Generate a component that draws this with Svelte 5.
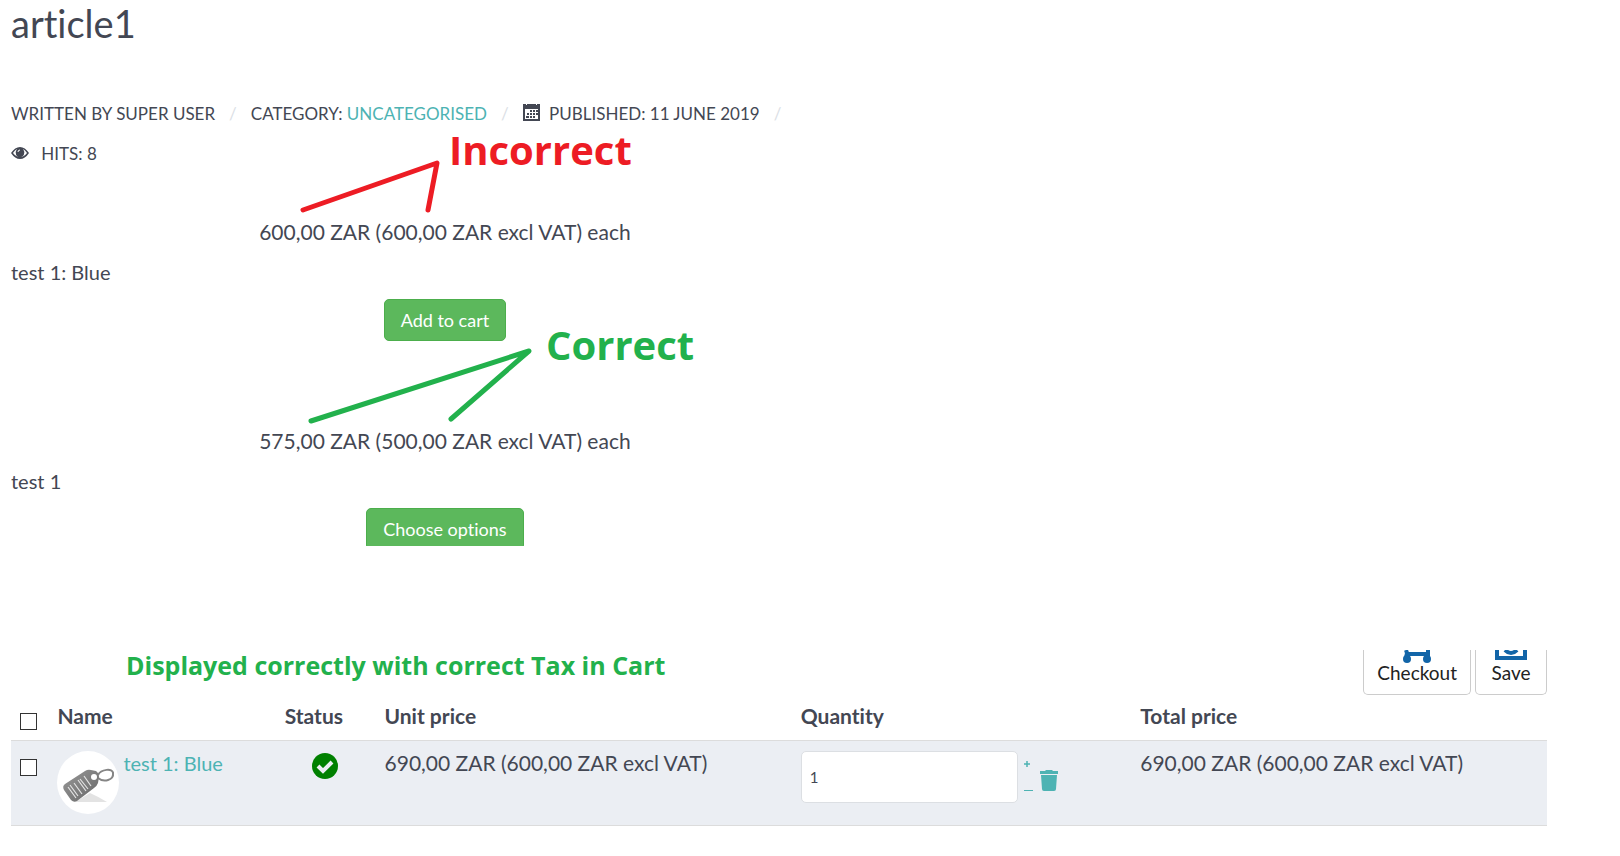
<script>
  const products = [
    { price: '600,00 ZAR (600,00 ZAR excl VAT) each', name: 'test 1: Blue', action: 'Add to cart' },
    { price: '575,00 ZAR (500,00 ZAR excl VAT) each', name: 'test 1', action: 'Choose options' }
  ];
  let quantity = $state(1);
</script>

<main>
  <article>
    <h1>article1</h1>
    <ul class="meta">
      <li>Written by Super User</li>
      <li>Category: <a href="#uncategorised">Uncategorised</a></li>
      <li>
        <svg class="calendar" viewBox="0 0 17 17" width="17" height="17" aria-hidden="true">
          <path d="M0 0h2v2h2V0h9v2h2V0h2v17H0zM2 5v10h13V5z" fill-rule="evenodd" />
          <path d="M0 0h17v4H0z" />
          <path d="M3 0h1v1H3zM13 0h1v1h-1z" fill="#fff" />
          <path d="M7 6h2v2H7zm3 0h2v2h-2zm3 0h2v2h-2zM4 9h2v2H4zm3 0h2v2H7zm3 0h2v2h-2zm3 0h2v2h-2zM3 12h3v2H3zm4 0h2v2H7zm3 0h2v2h-2z" />
        </svg>
        Published: 11 June 2019
      </li>
      <li>
        <svg class="eye" viewBox="0 0 18 12" width="18" height="12" aria-hidden="true">
          <path d="M0 6Q4 0 9 0T18 6Q14 12 9 12T0 6zM2 6Q5 10 9 10T16 6Q14 3 12 2Q14 5 13 7Q11 10 9 10Q6 10 5 7Q4 5 6 2Q4 3 2 6z" fill-rule="evenodd" />
          <circle cx="9" cy="6" r="4" />
          <path d="M7 5Q7 3 9 3" fill="none" stroke="#fff" />
        </svg>
        Hits: 8
      </li>
    </ul>

    {#each products as product}
      <section class="product">
        <p class="price">{product.price}</p>
        <p>{product.name}</p>
        <button class="buy" type="button">{product.action}</button>
      </section>
    {/each}

    <svg class="marks" viewBox="0 0 720 440" width="720" height="440" aria-hidden="true">
      <path class="red" d="M303 210L437 163L428 210" />
      <path class="green" d="M311 421L529 351L451 419" />
    </svg>
    <strong class="note wrong">Incorrect</strong>
    <strong class="note right">Correct</strong>
  </article>

  <section class="cart">
    <header>
      <h2>Displayed correctly with correct Tax in Cart</h2>
      <div class="tools">
        <button type="button">
          <svg viewBox="0 0 28 14" width="28" height="14" aria-hidden="true">
            <path d="M3 0L4 3 3 8M3 4h22V0" fill="none" stroke="#1265a8" stroke-width="4" />
            <circle cx="4" cy="9" r="4" /><circle cx="24" cy="9" r="4" />
          </svg>
          Checkout
        </button>
        <button type="button">
          <svg viewBox="0 0 32 14" width="32" height="14" aria-hidden="true">
            <path d="M2 0v8h28V0M10 0q6 6 12 0" fill="none" stroke="#1265a8" stroke-width="4" />
          </svg>
          Save
        </button>
      </div>
    </header>

    <table>
      <colgroup>
        <col class="c-check" /><col class="c-name" /><col class="c-status" /><col class="c-unit" /><col class="c-qty" /><col />
      </colgroup>
      <thead>
        <tr>
          <th><input type="checkbox" aria-label="Select all" /></th>
          <th>Name</th>
          <th>Status</th>
          <th>Unit price</th>
          <th>Quantity</th>
          <th>Total price</th>
        </tr>
      </thead>
      <tbody>
        <tr>
          <td><input type="checkbox" aria-label="Select test 1: Blue" /></td>
          <td>
            <div class="item">
              <svg viewBox="0 0 62 63" width="62" height="63" aria-hidden="true">
                <defs>
                  <linearGradient id="tag" x1="0" y1="0" x2="1" y2="1">
                    <stop offset="0" stop-color="#999" /><stop offset="1" stop-color="#666" />
                  </linearGradient>
                </defs>
                <ellipse cx="31" cy="31.500" rx="31" ry="31.500" fill="#fff" />
                <path d="M18 51L33 42Q42 46 50 51z" fill="#e3e3e3" />
                <path d="M41 24C44 18 56 17 56 22C57 29 47 32 41 27" fill="none" stroke="#858585" stroke-width="2" />
                <path d="M8 33L28 20Q31 18 34 19L39 20Q42 22 42 26L41 32Q40 35 37 37L20 50Q17 52 14 49L7 39Q5 35 8 33z" fill="url(#tag)" />
                <circle cx="37" cy="26" r="3" fill="#fff" />
                <path d="M11 36L19 47M13 34L21 45M17 32L25 43M21 29L29 40M23 28L31 38M27 25L34 35" stroke="#e4e4e4" stroke-width="1.200" />
              </svg>
              <a href="#product">test 1: Blue</a>
            </div>
          </td>
          <td class="status">
            <svg viewBox="0 0 26 26" width="26" height="26" role="img" aria-label="In stock">
              <circle cx="13" cy="13" r="13" fill="#008000" />
              <path d="M6 13l5 5 9-9" fill="none" stroke="#ebeef3" stroke-width="4" />
            </svg>
          </td>
          <td class="amount">690,00 ZAR (600,00 ZAR excl VAT)</td>
          <td>
            <div class="quantity">
              <input type="text" aria-label="Quantity" bind:value={quantity} />
              <div class="steps">
                <button type="button" aria-label="Increase quantity" onclick={() => quantity++}>
                  <svg viewBox="0 0 10 6" width="10" height="6"><path d="M0 3h6M3 0v6" stroke="#4db3b3" stroke-width="1.500" /></svg>
                </button>
                <button type="button" aria-label="Decrease quantity" onclick={() => quantity--}>
                  <svg viewBox="0 0 10 6" width="10" height="6"><path d="M0 2.500h9" stroke="#4db3b3" /></svg>
                </button>
              </div>
              <button type="button" aria-label="Remove">
                <svg viewBox="0 0 18 21" width="18" height="21" fill="#4db3b3">
                  <path d="M0 1h5l1-1h6l1 1h5v3H0zM1 5h16l-1 14q0 2-2 2H4q-2 0-2-2z" />
                </svg>
              </button>
            </div>
          </td>
          <td class="amount">690,00 ZAR (600,00 ZAR excl VAT)</td>
        </tr>
      </tbody>
    </table>
  </section>
</main>

<style>
  :global(body) { margin: 0; background: #fff; }
  main {
    padding: 0 73px 30px 11px;
    color: #434753;
    font: 20px/40px Lato, sans-serif;
    font-variant-ligatures: none;
  }
  h1, h2, p, ul { margin: 0; padding: 0; font-weight: 400; }
  a { color: #4db3b3; text-decoration: none; }
  button { font: inherit; cursor: pointer; }
  svg { display: block; }

  article { position: relative; width: 56.500%; height: 546px; overflow: hidden; }
  h1 { font-size: 38px; line-height: 46px; padding-bottom: 48px; }
  .meta {
    display: flex;
    flex-wrap: wrap;
    padding-right: 40px;
    list-style: none;
    font-size: 17px;
    text-transform: uppercase;
  }
  .meta li { display: flex; align-items: center; white-space: pre; }
  .meta li:not(:last-child)::after { content: '/'; color: #dcdfe6; margin: 0 14px; }
  .meta svg { fill: #434753; }
  .calendar { margin: 0 5px 4px 0; }
  .eye { margin: 0 8px 2px 0; }

  .product { padding-top: 38px; margin-bottom: 42px; }
  .product .price { text-align: center; }
  .price, .amount { font-size: 21px; }
  .buy {
    display: block;
    height: 42px;
    margin: 7px auto 0;
    padding: 0 16px;
    border: 1px solid #4cae4c;
    border-radius: 5px;
    background: #5cb85c;
    color: #fff;
    font-size: 18px;
    line-height: 38px;
  }
  .marks { position: absolute; left: -11px; top: 0; pointer-events: none; }
  .marks path { fill: none; stroke-width: 5; stroke-linecap: round; stroke-linejoin: round; }
  .red { stroke: #ed1c24; }
  .green { stroke: #22b14c; }
  .note { position: absolute; font: 700 40px/56px 'Open Sans', sans-serif; }
  .wrong { left: 438px; top: 122px; color: #ed1c24; }
  .right { left: 535px; top: 317px; color: #22b14c; }

  .cart { margin-top: 104px; }
  header { display: flex; justify-content: space-between; height: 45px; }
  h2 { padding-left: 115px; color: #22b14c; font: 700 25px/30px 'Open Sans', sans-serif; }
  .tools { display: flex; gap: 4px; }
  .tools button {
    display: flex;
    flex-direction: column;
    align-items: center;
    min-width: 72px;
    padding: 0 13px;
    border: 1px solid #ccc;
    border-top: 0;
    border-radius: 0 0 5px 5px;
    background: #fff;
    color: #222;
    font-size: 19px;
    line-height: 18px;
  }
  .tools svg { fill: #1265a8; }

  table { width: 100%; table-layout: fixed; border-collapse: collapse; }
  .c-check { width: 2.500%; }
  .c-name { width: 14.800%; }
  .c-status { width: 6.500%; }
  .c-unit { width: 27.100%; }
  .c-qty { width: 22.100%; }
  th, td { padding: 0 8px; text-align: left; vertical-align: top; border-bottom: 1px solid #dcdcdc; }
  th { height: 45px; font-size: 21px; line-height: 42px; }
  td { height: 74px; padding-top: 10px; background: #ebeef3; line-height: 24px; }
  input[type='checkbox'] {
    appearance: none;
    display: block;
    width: 17px;
    height: 17px;
    margin: 18px 0 0 1px;
    border: 1px solid #333;
    background: #fff;
  }
  td input[type='checkbox'] { margin-top: 8px; }
  .item { display: flex; gap: 4px; }
  .status { padding-right: 12px; }
  .status svg { margin: 2px auto 0; }
  .quantity { display: flex; align-items: center; gap: 6px; }
  .quantity input {
    box-sizing: border-box;
    width: 217px;
    height: 52px;
    padding: 0 8px;
    border: 1px solid #dcdfe3;
    border-radius: 5px;
    background: #fff;
    color: #434753;
    font: 15px Lato, sans-serif;
  }
  .quantity button { padding: 0; border: 0; background: none; }
  .quantity > button { margin-top: 6px; }
  .steps { display: grid; gap: 21px; }
  .steps button { line-height: 0; }
</style>
